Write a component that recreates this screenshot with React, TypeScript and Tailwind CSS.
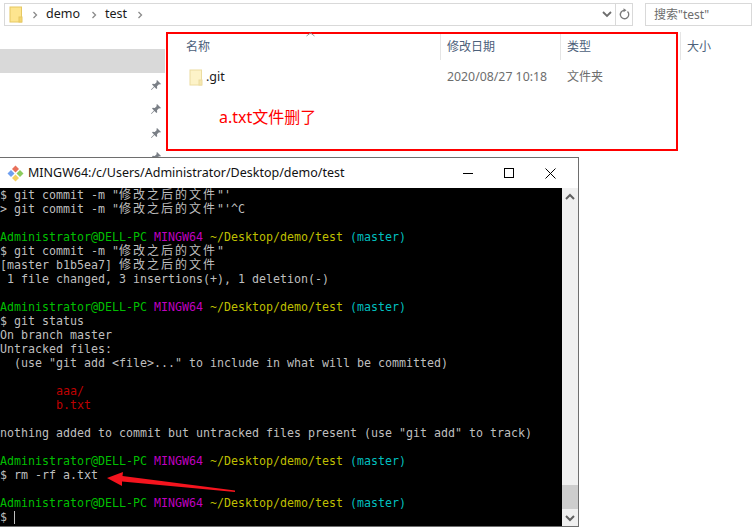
import React from "react";

const UI = { fontFamily: '"Noto Sans", "Noto Sans CJK SC", sans-serif' };
const G = "text-[#00bf00]";
const M = "text-[#bf00bf]";
const Y = "text-[#bfbf00]";
const C = "text-[#00bfbf]";

function Z({ children }: { children: string }) {
  return (
    <span className="text-[12px] leading-none tracking-[2px]" style={{ fontFamily: '"Noto Sans CJK SC", sans-serif' }}>
      {children}
    </span>
  );
}

function Prompt() {
  return (
    <div className="h-[14px]">
      <span className={G}>Administrator@DELL-PC</span> <span className={M}>MINGW64</span>{" "}
      <span className={Y}>~/Desktop/demo/test</span> <span className={C}>(master)</span>
    </div>
  );
}

function L({ children, className = "" }: { children?: React.ReactNode; className?: string }) {
  return <div className={`h-[14px] whitespace-pre ${className}`}>{children}</div>;
}

function Pin() {
  return (
    <svg width="12" height="12" viewBox="0 0 12 12" className="block shrink-0">
      <path d="M7 1l4 4-1 .6-1-.4-2 2 .2 2-.8.8-2-2L1.500 11 1 10.500l3-2.900-2-2 .8-.8 2 .2 2-2-.4-1z" fill="#7a7f86" />
    </svg>
  );
}

function FolderIcon({ pale }: { pale?: boolean }) {
  const fill = pale ? "#fdf3c8" : "#fde58f";
  const stroke = pale ? "#ecdca0" : "#e6c862";
  return (
    <svg width="14" height="17" viewBox="0 0 14 17" className="block shrink-0">
      <rect x="1" y="1" width="11.500" height="15" fill={fill} stroke={stroke} />
      <rect x="10" y="11" width="3" height="5" fill={pale ? "#f5e7b0" : "#f4d670"} stroke={stroke} />
    </svg>
  );
}

function Crumb() {
  return (
    <svg width="6" height="8" viewBox="0 0 6 8" className="block shrink-0">
      <path d="M1.500 1l3 3-3 3" fill="none" stroke="#8a8a8a" strokeWidth="1.300" />
    </svg>
  );
}

export default function App() {
  return (
    <div className="relative w-[752px] h-[527px] overflow-hidden bg-white flex flex-col" style={UI}>
      {/* explorer */}
      <div className="h-[157px] shrink-0 flex flex-col overflow-hidden">
        <div className="flex items-start pt-[3px] pl-[4px] h-[32px] shrink-0">
          <div className="w-[629px] h-[23px] border border-[#d9d9d9] flex items-center text-[12.500px] text-[#1a1a1a]">
            <div className="ml-[4px] mr-[9px]">
              <FolderIcon />
            </div>
            <Crumb />
            <span className="ml-[8px] w-[36px]">demo</span>
            <span className="ml-[9px]">
              <Crumb />
            </span>
            <span className="ml-[8px] w-[23px]">test</span>
            <span className="ml-[9px]">
              <Crumb />
            </span>
            <div className="ml-auto flex items-center h-full">
              <svg width="10" height="7" viewBox="0 0 10 7" className="block mr-[3px]">
                <path d="M1 1l4 4 4-4" fill="none" stroke="#6d6d6d" strokeWidth="1.800" />
              </svg>
              <div className="w-[17px] h-full border-l border-[#d9d9d9] flex items-center justify-center">
                <svg width="11" height="13" viewBox="0 0 11 13" className="block">
                  <path d="M8.500 3.500a4.200 4.200 0 1 1-3-1.200" fill="none" stroke="#7a7a7a" strokeWidth="1.300" />
                  <path d="M4.500 .2l3 2-3 2z" fill="#7a7a7a" />
                </svg>
              </div>
            </div>
          </div>
          <div className="ml-[12px] grow h-[23px] border border-[#d9d9d9] pl-[8px] flex items-center text-[12px] text-[#6d6d6d] leading-none">
            搜索"test"
          </div>
        </div>
        <div className="flex grow min-h-0">
          <div className="w-[165px] shrink-0 flex flex-col">
            <div className="h-[17px] shrink-0" />
            <div className="h-[24px] shrink-0 bg-[#d9d9d9]" />
            <div className="flex flex-col items-end pr-[3px] pt-[6px] gap-[12px] shrink-0">
              <Pin />
              <Pin />
              <Pin />
              <Pin />
            </div>
          </div>
          <div className="grow pl-[21px] relative">
            <div className="flex h-[28px] text-[12px] text-[#4c607a]">
              <div className="w-[254px] pt-[6px]">名称</div>
              <div className="w-[120px] pl-[6px] pt-[6px] border-l border-[#e5e5e5]">修改日期</div>
              <div className="w-[120px] pl-[6px] pt-[6px] border-l border-[#e5e5e5]">类型</div>
              <div className="pl-[6px] pt-[6px] border-l border-[#e5e5e5]">大小</div>
            </div>
            <div className="flex h-[24px] items-center text-[12px] mt-[5px]">
              <div className="w-[255px] pl-[3px] flex items-center gap-[3px] text-[#1a1a1a]">
                <FolderIcon pale />
                <span className="text-[12.500px]">.git</span>
              </div>
              <div className="w-[120px] pl-[6px] text-[12.300px] text-[#6d6d6d]">2020/08/27 10:18</div>
              <div className="pl-[6px] text-[#6d6d6d]">文件夹</div>
            </div>
            <div className="mt-[17px] ml-[33px] text-[16px] text-[#ff0000] leading-[22px]">a.txt文件删了</div>
          </div>
        </div>
      </div>

      {/* terminal window */}
      <div className="w-[579px] h-[370px] shrink-0 border-t border-r border-b border-[#6e6e6e] flex flex-col bg-white relative">
        <div className="h-[30px] shrink-0 flex items-center pl-[7px]">
          <svg width="17" height="17" viewBox="0 0 17 17" className="block shrink-0">
            <path d="M8.500 .5l3.500 3.500-3.500 3.500L5 4z" fill="#e8705a" />
            <path d="M4 5l3.500 3.500L4 12 .5 8.500z" fill="#6f9ff0" />
            <path d="M13 5l3.500 3.500L13 12 9.500 8.500z" fill="#8ccb5e" />
            <path d="M8.500 9.500l3.500 3.500-3.500 3.500L5 13z" fill="#f3d060" />
          </svg>
          <span className="ml-[4px] text-[12.500px] text-[#111]">MINGW64:/c/Users/Administrator/Desktop/demo/test</span>
          <div className="ml-auto flex items-center gap-[31px] pr-[22px]">
            <div className="w-[10px] h-px bg-black" />
            <div className="w-[10px] h-[10px] border border-black" />
            <svg width="11" height="11" viewBox="0 0 11 11" className="block">
              <path d="M.5.5l10 10M10.500.5l-10 10" stroke="#000" strokeWidth="1" fill="none" />
            </svg>
          </div>
        </div>
        <div className="grow flex min-h-0">
          <div
            className="grow bg-black text-[#bfbfbf] text-[11.630px] leading-[14px] pt-0 overflow-hidden"
            style={{ fontFamily: '"DejaVu Sans Mono", "Noto Sans CJK SC", monospace' }}
          >
            <L>
              $ git commit -m "<Z>修改之后的文件</Z>"'
            </L>
            <L>
              {"> "}git commit -m "<Z>修改之后的文件</Z>"'^C
            </L>
            <L />
            <Prompt />
            <L>
              $ git commit -m "<Z>修改之后的文件</Z>"
            </L>
            <L>
              [master b1b5ea7] <Z>修改之后的文件</Z>
            </L>
            <L> 1 file changed, 3 insertions(+), 1 deletion(-)</L>
            <L />
            <Prompt />
            <L>$ git status</L>
            <L>On branch master</L>
            <L>Untracked files:</L>
            <L>{'  (use "git add <file>..." to include in what will be committed)'}</L>
            <L />
            <L className="text-[#bf0000]">{"        aaa/"}</L>
            <L className="text-[#bf0000]">{"        b.txt"}</L>
            <L />
            <L>nothing added to commit but untracked files present (use "git add" to track)</L>
            <L />
            <Prompt />
            <L>$ rm -rf a.txt</L>
            <L />
            <Prompt />
            <L>
              ${" "}
              <span className="inline-block w-px h-[13px] bg-[#bfbfbf] align-middle" />
            </L>
          </div>
          <div className="w-[16px] shrink-0 bg-[#f0f0f0] flex flex-col items-center">
            <svg width="10" height="8" viewBox="0 0 10 8" className="block mt-[5px]">
              <path d="M1 6l4-4 4 4" fill="none" stroke="#606060" strokeWidth="2" />
            </svg>
            <div className="mt-auto w-full h-[24px] bg-[#cdcdcd]" />
            <svg width="10" height="8" viewBox="0 0 10 8" className="block mt-[5px] mb-[4px]">
              <path d="M1 2l4 4 4-4" fill="none" stroke="#606060" strokeWidth="2" />
            </svg>
          </div>
        </div>
      </div>

      {/* annotations */}
      <div className="absolute left-[166px] top-[32px] w-[512px] h-[119px] border-2 border-[#ff0000]" />
      <svg width="9" height="5" viewBox="0 0 9 5" className="absolute left-[306px] top-[32px]">
        <path d="M.5 4l4-3 4 3" fill="none" stroke="#9a9a9a" strokeWidth="1" />
      </svg>
      <svg width="752" height="527" viewBox="0 0 752 527" className="absolute left-0 top-0 pointer-events-none">
        <path d="M107 478L123 472L122.500 476L235 490.500L235 492L122 481.500L122 486z" fill="#f5141e" />
      </svg>
    </div>
  );
}
